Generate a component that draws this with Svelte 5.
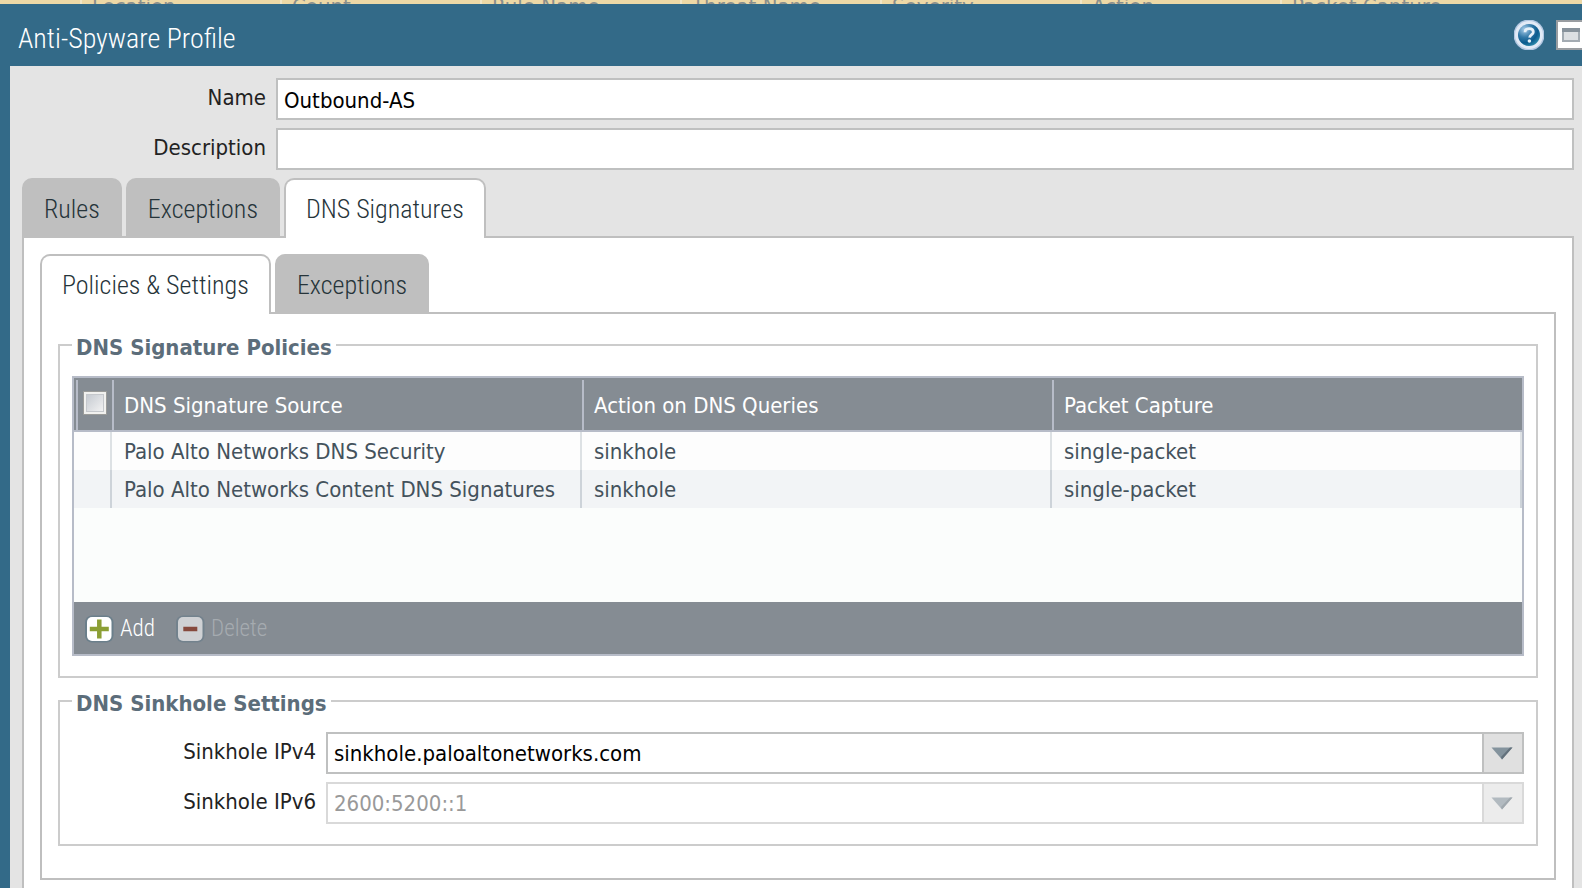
<script>
  const backdropColumns = ['Location', 'Count', 'Rule Name', 'Threat Name', 'Severity', 'Action', 'Packet Capture'];
  const tabs = ['Rules', 'Exceptions', 'DNS Signatures'];
  const subTabs = ['Policies & Settings', 'Exceptions'];
  const rows = [
    { source: 'Palo Alto Networks DNS Security', action: 'sinkhole', capture: 'single-packet' },
    { source: 'Palo Alto Networks Content DNS Signatures', action: 'sinkhole', capture: 'single-packet' }
  ];
  let activeTab = $state(2);
  let activeSubTab = $state(0);
  let name = $state('Outbound-AS');
  let description = $state('');
</script>

<div class="page">
  <div class="backdrop">
    {#each backdropColumns as column}
      <span>{column}</span>
    {/each}
  </div>

  <div class="dialog">
    <header class="titlebar">
      <h1>Anti-Spyware Profile</h1>
      <button class="icon-button" aria-label="Help">
        <svg width="30" height="30" viewBox="0 0 30 30">
          <defs>
            <radialGradient id="ball" cx="0.3" cy="0.25" r="0.8">
              <stop offset="0" stop-color="#a9cdea" />
              <stop offset="0.45" stop-color="#3379a8" />
              <stop offset="0.75" stop-color="#0a5a8e" />
              <stop offset="1" stop-color="#2b86a8" />
            </radialGradient>
          </defs>
          <circle cx="15" cy="15" r="15.5" fill="#b3c8e2" />
          <circle cx="15" cy="15" r="14" fill="#e2eaf6" />
          <circle cx="15" cy="15" r="11" fill="url(#ball)" />
          <path d="M11 12.2C11 9.6 12.9 8.6 15.2 8.6C17.8 8.6 19.3 9.9 19.3 11.9C19.3 14.6 15.9 14.6 15.6 17.6" fill="none" stroke="#e6f1f9" stroke-width="2.8" />
          <circle cx="15.4" cy="21" r="1.8" fill="#e6f1f9" />
        </svg>
      </button>
      <button class="icon-button window" aria-label="Maximize">
        <svg width="30" height="30" viewBox="0 0 30 30">
          <rect x="1" y="1" width="28" height="28" fill="#fff" stroke="#999da1" stroke-width="2" />
          <rect x="7" y="9" width="16" height="12" fill="#dcdfe2" stroke="#a3abb2" stroke-width="2" />
          <rect x="6" y="8" width="18" height="4" fill="#87929b" />
        </svg>
      </button>
    </header>

    <div class="body">
      <div class="form">
        <label for="name">Name</label>
        <input id="name" type="text" bind:value={name} />
        <label for="description">Description</label>
        <input id="description" type="text" bind:value={description} />
      </div>

      <div class="tabs" role="tablist">
        {#each tabs as tab, i}
          <button role="tab" class:active={activeTab === i} aria-selected={activeTab === i} onclick={() => (activeTab = i)}>{tab}</button>
        {/each}
      </div>

      <section class="panel outer">
        <div class="tabs" role="tablist">
          {#each subTabs as tab, i}
            <button role="tab" class:active={activeSubTab === i} aria-selected={activeSubTab === i} onclick={() => (activeSubTab = i)}>{tab}</button>
          {/each}
        </div>

        <section class="panel inner">
          <fieldset>
            <legend>DNS Signature Policies</legend>
            <div class="grid">
              <div class="grid-body">
                <table>
                  <colgroup><col class="check" /><col /><col /><col /></colgroup>
                  <thead>
                    <tr>
                      <th><input type="checkbox" aria-label="Select all" /></th>
                      <th>DNS Signature Source</th>
                      <th>Action on DNS Queries</th>
                      <th>Packet Capture</th>
                    </tr>
                  </thead>
                  <tbody>
                    {#each rows as row}
                      <tr>
                        <td></td>
                        <td>{row.source}</td>
                        <td>{row.action}</td>
                        <td>{row.capture}</td>
                      </tr>
                    {/each}
                  </tbody>
                </table>
              </div>
              <div class="toolbar">
                <button>
                  <svg width="30" height="28" viewBox="0 0 30 28">
                    <rect x="1" y="0.5" width="28.5" height="27" rx="7" fill="#6b7f8b" />
                    <rect x="3" y="2" width="24.5" height="24" rx="5" fill="#fff" />
                    <path d="M15.3 4.5V23.5M5.8 14H24.8" stroke="#8c9f35" stroke-width="4.5" />
                  </svg>
                  Add
                </button>
                <button disabled>
                  <svg width="30" height="28" viewBox="0 0 30 28">
                    <rect x="1" y="0.5" width="28.5" height="27" rx="7" fill="#73828d" />
                    <rect x="3" y="2" width="24.5" height="24" rx="5" fill="#cfd1d4" />
                    <path d="M8.3 14H22.3" stroke="#86493d" stroke-width="4.5" />
                  </svg>
                  Delete
                </button>
              </div>
            </div>
          </fieldset>

          <fieldset>
            <legend>DNS Sinkhole Settings</legend>
            <div class="form">
              <label for="ipv4">Sinkhole IPv4</label>
              <div class="combo">
                <select id="ipv4"><option>sinkhole.paloaltonetworks.com</option></select>
                <span class="trigger">
                  <svg width="22" height="13" viewBox="0 0 22 13"><path d="M0.5 0.5H21.5L11 12.5Z" fill="#84939d" /><path d="M19 0.5H21.5L11 12.5L10 10Z" fill="#63717c" /></svg>
                </span>
              </div>
              <label for="ipv6">Sinkhole IPv6</label>
              <div class="combo disabled">
                <select id="ipv6" disabled><option>2600:5200::1</option></select>
                <span class="trigger">
                  <svg width="22" height="13" viewBox="0 0 22 13"><path d="M0.5 0.5H21.5L11 12.5Z" fill="#84939d" /><path d="M19 0.5H21.5L11 12.5L10 10Z" fill="#63717c" /></svg>
                </span>
              </div>
            </div>
          </fieldset>
        </section>
      </section>
    </div>
  </div>
</div>

<style>
  :global(body) {
    margin: 0;
  }
  .page {
    --narrow: 'Roboto Condensed', Roboto, sans-serif;
    display: flex;
    flex-direction: column;
    min-height: 100vh;
    overflow: hidden;
    font-family: 'DejaVu Sans Condensed', 'Noto Sans', sans-serif;
    font-size: 22px;
    line-height: 26px;
    color: #222;
  }
  .page * {
    box-sizing: border-box;
  }
  button, input, select {
    font: inherit;
    margin: 0;
  }
  button {
    border: 0;
    background: none;
    padding: 0;
    cursor: pointer;
  }

  .backdrop {
    display: flex;
    align-items: flex-end;
    height: 4px;
    padding-left: 80px;
    overflow: hidden;
    background: #edd8a6;
    color: #8a8f8c;
  }
  .backdrop span {
    flex: 0 0 200px;
    height: 10px;
    line-height: 26px;
    padding-left: 10px;
    border-left: 2px solid #f3e6c6;
    white-space: nowrap;
  }

  .dialog {
    flex: 1;
    display: flex;
    flex-direction: column;
    background: #336a88;
    padding-left: 10px;
  }
  .titlebar {
    display: flex;
    align-items: center;
    gap: 12px;
    height: 62px;
    padding-left: 8px;
    margin-right: -4px;
  }
  h1 {
    flex: 1;
    margin: 0;
    padding-top: 8px;
    font: 300 28px/36px var(--narrow);
    color: #fff;
  }
  .icon-button {
    display: flex;
  }

  .body {
    flex: 1;
    display: flex;
    flex-direction: column;
    background: #e4e4e4;
    padding: 12px 8px 0 12px;
  }
  .form {
    display: grid;
    grid-template-columns: 244px 1fr;
    gap: 8px 10px;
  }
  label {
    text-align: right;
    line-height: 40px;
  }
  input[type='text'], select {
    width: 100%;
    height: 42px;
    padding: 2px 6px 0;
    border: 2px solid #bfc0c0;
    border-radius: 0;
    background: #fff;
    color: #000;
    outline: none;
  }

  .tabs {
    display: flex;
    gap: 4px;
    margin-bottom: -2px;
    position: relative;
  }
  .tabs button {
    height: 60px;
    padding: 2px 20px 0;
    border: 2px solid #bfbfbf;
    border-radius: 10px 10px 0 0;
    background: #bfbfbf;
    color: #26343a;
    font: 300 26px/36px var(--narrow);
    white-space: nowrap;
  }
  .tabs button.active {
    background: #fff;
    border-bottom: 0;
    padding-bottom: 2px;
  }
  .body > .tabs {
    margin-top: 8px;
  }
  .panel {
    border: 2px solid #bfbfbf;
    background: #fff;
  }
  .outer {
    flex: 1;
    border-bottom: 0;
    padding: 16px 16px 8px;
  }
  .inner {
    padding: 16px 16px 32px;
  }

  fieldset {
    margin: 0;
    min-width: 0;
    border: 2px solid #ccc;
    padding: 16px 12px 20px;
  }
  fieldset + fieldset {
    margin-top: 8px;
  }
  legend {
    padding: 6px 4px 0;
    line-height: 24px;
    font-weight: 700;
    color: #5c6d7a;
  }

  .grid {
    border: 2px solid #b7bcc8;
    background: #fbfdfc;
  }
  .grid-body {
    min-height: 224px;
  }
  table {
    width: 100%;
    table-layout: fixed;
    border-collapse: separate;
    border-spacing: 0;
    color: #44525c;
  }
  col.check {
    width: 38px;
  }
  th, td {
    text-align: left;
    white-space: nowrap;
    overflow: hidden;
  }
  th {
    height: 54px;
    padding: 4px 12px 0;
    border-bottom: 2px solid #b7bcc8;
    background: linear-gradient(#b7bcc8, #b7bcc8) no-repeat 0 2px / 2px 100% #858c93;
    color: #fff;
    font-weight: 400;
  }
  th:first-child {
    padding: 0 0 2px 9px;
    background-position: 2px 2px;
  }
  td {
    height: 38px;
    padding: 2px 10px 0 12px;
    border-right: 2px solid #dde1e4;
    background: #fdfdfd;
  }
  tr:nth-child(even) td {
    background: #f2f4f6;
    border-color: #cdd3d9;
  }
  input[type='checkbox'] {
    display: block;
    appearance: none;
    width: 24px;
    height: 24px;
    border: 3px solid #f1f1ef;
    outline: 1px solid #9a9b99;
    outline-offset: -1px;
    background: linear-gradient(135deg, #c3c8cf, #f4f4f4);
    box-shadow: inset 0 0 0 1px #c5c8cc;
  }
  .toolbar {
    display: flex;
    align-items: center;
    gap: 20px;
    height: 52px;
    padding: 2px 0 0 10px;
    background: #858c93;
  }
  .toolbar button {
    display: flex;
    align-items: center;
    gap: 6px;
    color: #fff;
    font: 300 23px/28px var(--narrow);
  }
  .toolbar button:disabled {
    color: #a5abb0;
  }

  .combo {
    display: grid;
  }
  .combo > * {
    grid-area: 1 / 1;
  }
  select {
    appearance: none;
    opacity: 1;
  }
  .trigger {
    justify-self: end;
    display: flex;
    align-items: center;
    justify-content: center;
    width: 42px;
    padding-right: 2px;
    border: 2px solid #bfc0c0;
    background: #e0e0e0;
    pointer-events: none;
  }
  .disabled select {
    color: #999;
    border-color: #d9d9d9;
  }
  .disabled .trigger {
    border-color: #d9d9d9;
    background: #ececec;
  }
  .disabled svg {
    opacity: 0.55;
  }
</style>
